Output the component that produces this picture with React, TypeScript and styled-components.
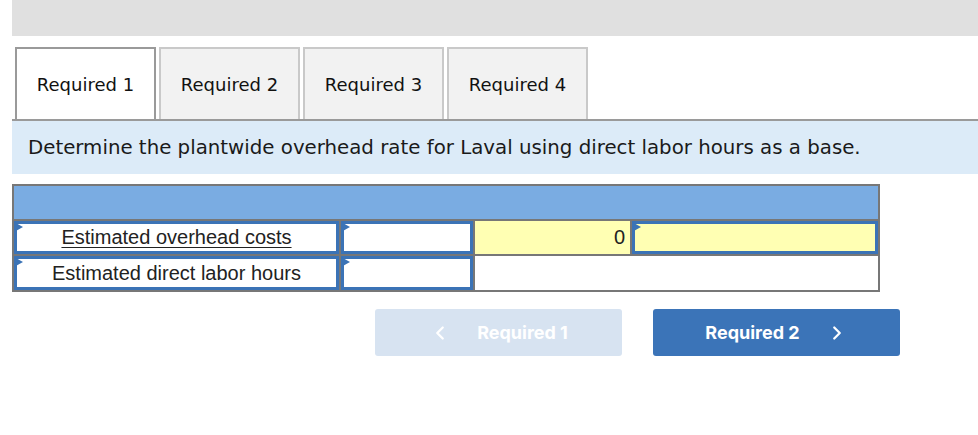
import React from 'react'
import styled, { createGlobalStyle } from 'styled-components'
import { ChevronLeft, ChevronRight } from 'lucide-react'

const GlobalStyle = createGlobalStyle`
  html, body { margin: 0; padding: 0; background: #fff; }
  body { font-family: "DejaVu Sans", Verdana, sans-serif; }
`

const Page = styled.div`
  padding-left: 12px;
`

const TopBar = styled.div`
  height: 36px;
  background: #e0e0e0;
`

const TabRow = styled.div`
  display: flex;
  gap: 3px;
  margin-top: 11px;
  padding-left: 3px;
  border-bottom: 2px solid #9a9a9a;
`

const Tab = styled.div<{ $active?: boolean }>`
  width: 137px;
  height: 70px;
  display: flex;
  align-items: center;
  justify-content: center;
  font-size: 18px;
  color: #111;
  background: ${p => (p.$active ? '#fff' : '#f2f2f2')};
  border: 2px solid ${p => (p.$active ? '#9a9a9a' : '#c9c9c9')};
  border-bottom: none;
`

const Prompt = styled.div`
  height: 53px;
  display: flex;
  align-items: center;
  padding-left: 16px;
  background: #dcebf8;
  color: #1a1a1a;
  font-size: 19.8px;
`

const Grid = styled.div`
  margin-top: 10px;
  width: 864px;
  display: grid;
  grid-template-columns: 325px 132px 155px 246px;
  grid-template-rows: 33px 33px 34px;
  gap: 2px;
  padding: 2px;
  background: #777;
  font-family: "Liberation Sans", Arial, sans-serif;
`

const HeaderCell = styled.div`
  grid-column: 1 / -1;
  background: #7aace2;
`

const InputCell = styled.div<{ $yellow?: boolean }>`
  position: relative;
  display: flex;
  align-items: center;
  justify-content: center;
  background: ${p => (p.$yellow ? '#ffffb3' : '#fff')};
  border: 3px solid #3b73b6;
  font-size: 20px;
  color: #222;
`

const Flag = styled.span`
  position: absolute;
  left: -3px;
  top: -2px;
  width: 0;
  height: 0;
  border-top: 5px solid transparent;
  border-bottom: 5px solid transparent;
  border-left: 9px solid #3b73b6;
`

const LabelLink = styled.span`
  text-decoration: underline;
  text-underline-offset: 3px;
  text-decoration-thickness: 1px;
`

const ValueCell = styled.div<{ $wide?: boolean }>`
  grid-column: ${p => (p.$wide ? '3 / 5' : 'auto')};
  display: flex;
  align-items: center;
  justify-content: flex-end;
  padding-right: 5px;
  background: ${p => (p.$wide ? '#fff' : '#ffffb3')};
  font-size: 20px;
  color: #222;
`

const ButtonRow = styled.div`
  display: flex;
  gap: 31px;
  margin-top: 17px;
  margin-left: 363px;
`

const NavButton = styled.button<{ $disabled?: boolean }>`
  width: 247px;
  height: 47px;
  display: flex;
  align-items: center;
  justify-content: center;
  gap: 26px;
  border: none;
  border-radius: 3px;
  background: ${p => (p.$disabled ? '#d7e3f1' : '#3b74b8')};
  color: #fff;
  font-family: Inter, Roboto, sans-serif;
  font-weight: 700;
  font-size: 18px;
  cursor: ${p => (p.$disabled ? 'default' : 'pointer')};
`

export default function App() {
  return (
    <>
      <GlobalStyle />
      <Page>
        <TopBar />
        <TabRow>
          <Tab $active>Required 1</Tab>
          <Tab>Required 2</Tab>
          <Tab>Required 3</Tab>
          <Tab>Required 4</Tab>
        </TabRow>
        <Prompt>Determine the plantwide overhead rate for Laval using direct labor hours as a base.</Prompt>
        <Grid>
          <HeaderCell />
          <InputCell>
            <Flag />
            <LabelLink>Estimated overhead costs</LabelLink>
          </InputCell>
          <InputCell>
            <Flag />
          </InputCell>
          <ValueCell>0</ValueCell>
          <InputCell $yellow>
            <Flag />
          </InputCell>
          <InputCell>
            <Flag />
            Estimated direct labor hours
          </InputCell>
          <InputCell>
            <Flag />
          </InputCell>
          <ValueCell $wide />
        </Grid>
        <ButtonRow>
          <NavButton $disabled>
            <ChevronLeft size={22} strokeWidth={2.5} />
            Required 1
          </NavButton>
          <NavButton>
            Required 2
            <ChevronRight size={22} strokeWidth={2.5} />
          </NavButton>
        </ButtonRow>
      </Page>
    </>
  )
}
